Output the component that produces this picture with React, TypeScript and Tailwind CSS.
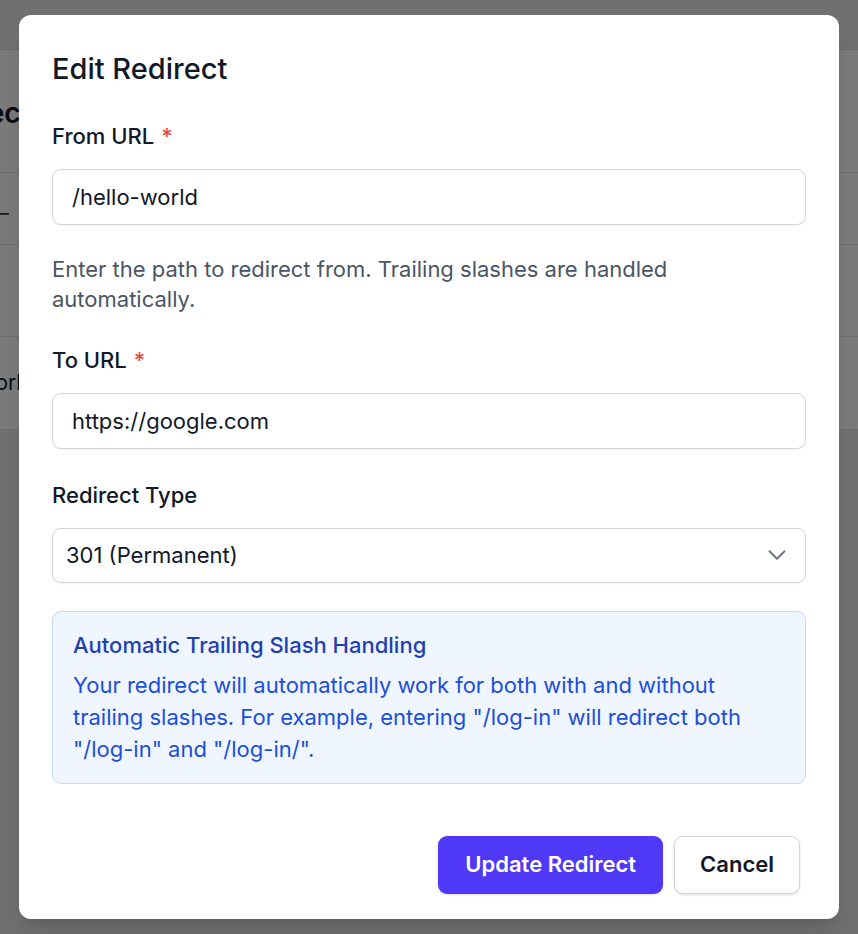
import { ChevronDown } from "lucide-react";

const fieldInput =
  "h-[56px] w-full rounded-[9px] border border-[#d1d5db] bg-white px-[19px] text-[22px] text-[#111827] shadow-[0_1px_2px_rgba(0,0,0,0.05)] outline-none";

const Label = ({ text, required }: { text: string; required?: boolean }) => (
  <label className="block text-[22px] leading-[28px] font-medium text-[#111827]">
    {text}
    {required && <span className="ml-[7px] text-[#ef4444]">*</span>}
  </label>
);

const BackgroundPage = () => (
  <div className="h-[934px] w-[858px] overflow-hidden bg-[#ebebeb]">
    <div className="h-[50px] border-b border-[#dcdcdc] bg-[#ebebeb]" />
    <div className="bg-white">
      <div className="flex h-[123px] items-center border-b border-[#e5e7eb] pt-[4px]">
        <h1 className="ml-[-82px] text-[28px] font-semibold whitespace-nowrap text-[#111827]">Redirects</h1>
      </div>
      <div className="flex h-[72px] items-center border-b border-[#e5e7eb] pt-[8px]">
        <span className="ml-[-11px] text-[20px] text-[#374151]">—</span>
      </div>
      <div className="h-[92px] border-b border-[#e5e7eb]" />
      <div className="flex h-[93px] items-center border-b border-[#e5e7eb]">
        <span className="ml-[-86px] text-[21px] whitespace-nowrap text-[#111827]">/hello-world</span>
      </div>
    </div>
  </div>
);

export default function App() {
  return (
    <div className="relative h-[934px] w-[858px] overflow-hidden font-['Inter','Liberation_Sans',sans-serif]">
      <BackgroundPage />
      <div className="absolute inset-0 flex items-center justify-center bg-black/[0.52] pb-[1px]">
        <div className="w-[820px] rounded-[12px] bg-white px-[33px] pt-[36px] pb-[25px] shadow-xl">
          <h2 className="text-[29px] leading-[36px] font-medium text-[#111827]">Edit Redirect</h2>

          <div className="mt-[35px]">
            <Label text="From URL" required />
            <input className={`mt-[19px] ${fieldInput}`} defaultValue="/hello-world" />
            <p className="mt-[29px] text-[22px] leading-[30px] text-[#4b5563]">
              Enter the path to redirect from. Trailing slashes are handled automatically.
            </p>
          </div>

          <div className="mt-[32px]">
            <Label text="To URL" required />
            <input className={`mt-[19px] ${fieldInput}`} defaultValue="https://google.com" />
          </div>

          <div className="mt-[32px]">
            <Label text="Redirect Type" />
            <div className="mt-[19px] flex h-[55px] w-full items-center justify-between rounded-[9px] border border-[#d1d5db] bg-white pr-[13px] pl-[13px] shadow-[0_1px_2px_rgba(0,0,0,0.05)]">
              <span className="text-[22px] text-[#111827]">301 (Permanent)</span>
              <ChevronDown className="h-[30px] w-[30px] text-[#6b7280]" strokeWidth={1.5} />
            </div>
          </div>

          <div className="mt-[28px] rounded-[9px] border border-[#bfdbfe] bg-[#eff6ff] px-[20px] pt-[19px] pb-[18px]">
            <p className="text-[22px] leading-[28px] font-medium text-[#1e40af]">
              Automatic Trailing Slash Handling
            </p>
            <p className="mt-[10px] text-[22px] leading-[32px] text-[#1d4ed8]">
              Your redirect will automatically work for both with and without trailing slashes. For example, entering "/log-in" will redirect both "/log-in" and "/log-in/".
            </p>
          </div>

          <div className="mt-[52px] flex justify-end gap-[11px] pr-[6px]">
            <button className="h-[58px] rounded-[9px] bg-indigo-600 px-[27px] text-[22px] font-semibold text-white shadow-sm">
              Update Redirect
            </button>
            <button className="h-[58px] rounded-[9px] border border-[#d1d5db] bg-white px-[25px] text-[22px] font-semibold text-[#111827] shadow-sm">
              Cancel
            </button>
          </div>
        </div>
      </div>
    </div>
  );
}
